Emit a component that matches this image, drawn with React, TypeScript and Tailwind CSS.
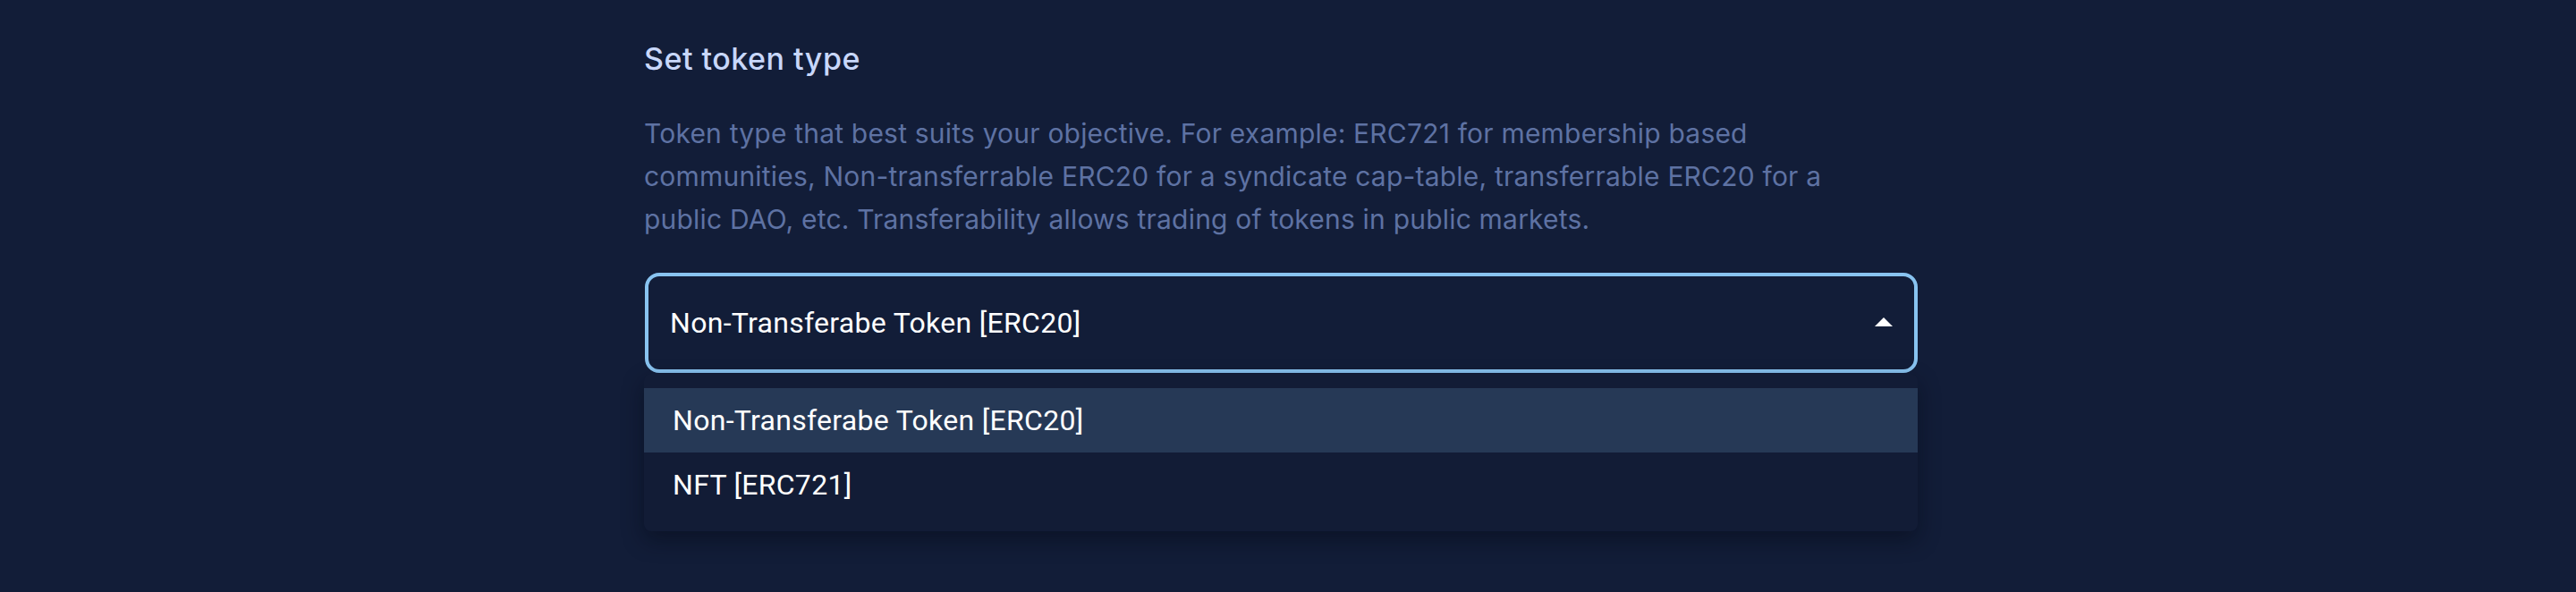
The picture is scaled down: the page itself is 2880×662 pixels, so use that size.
import { useState } from "react";

const OPTIONS = ["Non-Transferabe Token [ERC20]", "NFT [ERC721]"];

function ArrowUp() {
  return (
    <svg viewBox="0 0 24 24" className="w-12 h-12 fill-white" aria-hidden>
      <path d="M7 14l5-5 5 5z" />
    </svg>
  );
}

export default function App() {
  const [value] = useState(OPTIONS[0]);

  return (
    <div className="min-h-[662px] w-full bg-[#121d38] pl-[720px] pt-[42px]">
      <div className="w-[1424px]">
        <h2 className="font-['Inter',sans-serif] text-[34px] leading-[48px] font-medium tracking-[0.5px] text-[#c8d7fa]">
          Set token type
        </h2>
        <p className="mt-[35px] font-['Inter',sans-serif] text-[30px] leading-[48px] tracking-[0.2px] text-[#5e72a3]">
          Token type that best suits your objective. For example: ERC721 for membership based
          <br />
          communities, Non-transferrable ERC20 for a syndicate cap-table, transferrable ERC20 for a
          <br />
          public DAO, etc. Transferability allows trading of tokens in public markets.
        </p>

        <div className="mt-[36px] ml-px flex h-[112px] w-[1423px] items-center justify-between rounded-[16px] border-4 border-[#88c3f0] bg-[#121d38] pl-[24px] pr-[10px]">
          <span className="font-['Roboto',sans-serif] text-[32px] tracking-[0.3px] text-white">{value}</span>
          <ArrowUp />
        </div>

        <ul className="mt-px rounded-[8px] bg-[#121c36] py-[16px] shadow-[0_10px_24px_rgba(4,8,20,0.45)]">
          {OPTIONS.map((opt) => (
            <li
              key={opt}
              className={
                opt === value
                  ? "flex h-[72px] items-center bg-[#263956] px-[32px] font-['Roboto',sans-serif] text-[32px] tracking-[0.3px] text-white"
                  : "flex h-[72px] items-center px-[32px] font-['Roboto',sans-serif] text-[32px] tracking-[0.3px] text-white"
              }
            >
              {opt}
            </li>
          ))}
        </ul>
      </div>
    </div>
  );
}
